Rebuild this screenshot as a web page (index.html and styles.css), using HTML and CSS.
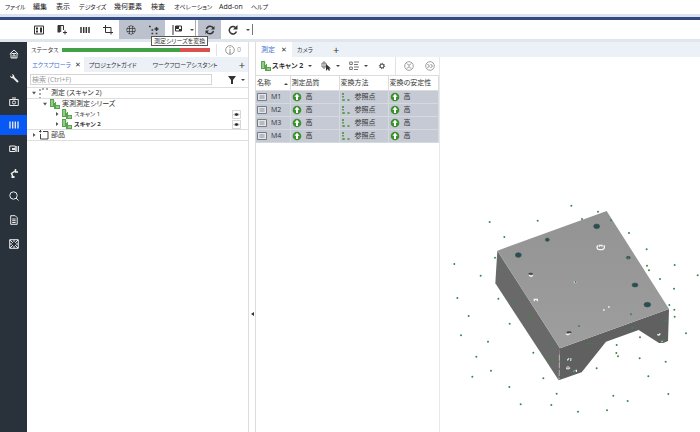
FILE: index.html
```html
<!DOCTYPE html>
<html lang="ja">
<head>
<meta charset="utf-8">
<title>測定</title>
<link rel="stylesheet" href="styles.css">
</head>
<body>
<svg class="defs" aria-hidden="true">
  <defs>
    <symbol id="scan" viewBox="0 0 10 10"><path d="M0 0h4v8H0zM4 3h2v3h4v4H4z" fill="#58a44c"/><path d="M4.500 1v3M2 1v6M6 8h3" stroke="#d6ecd0" fill="none"/></symbol>
    <symbol id="up" viewBox="0 0 10 10"><circle cx="5" cy="5" r="4.300" fill="#3b8f2c"/><path d="M5 1.800 7.600 4.700H6V8H4V4.700H2.400z" fill="#fff"/></symbol>
    <symbol id="ref" viewBox="0 0 10 10"><path d="M2 1v2M2 4v1.500M1.300 8h2.500M6.500 8h2" stroke="#3b8f2c" stroke-width="1.500"/></symbol>
    <symbol id="meas" viewBox="0 0 10 8"><path d="M.5.5h9v7h-9z" fill="#e2e5ea" stroke="#777c84"/><path d="M2.500 3h5M2.500 5h5" stroke="#8b9098"/></symbol>
    <symbol id="eye" viewBox="0 0 10 10"><path d="M.5.5h9v9h-9z" fill="#fff" stroke="#cfcfcf"/><path d="M1.300 5Q5 1.500 8.700 5 5 8.500 1.300 5z" fill="#aaa"/><circle cx="5" cy="5" r="1.500" fill="#222"/></symbol>
  </defs>
</svg>
<nav class="menu">
  <button>ファイル</button><button>編集</button><button>表示</button><button>デジタイズ</button><button>幾何要素</button><button>検査</button><button>オペレーション</button><button>Add-on</button><button>ヘルプ</button>
</nav>
<div class="toolbar">
  <button aria-label="パネル"><svg viewBox="0 0 10 10"><path d="M.5 1h9v8h-9z"/><path d="M2 2.500h2v2H2zM2 5.500h2v2H2zM6 2.500h2v5H6z" class="fill"/></svg></button>
  <button aria-label="追加"><svg viewBox="0 0 10 10"><path d="M1 .5h5.500V5M3.700.5V7M6 7.500h4M8 5.500v4"/><path d="M.5.500H3v7H.5z" class="fill"/></svg></button>
  <button aria-label="測定シリーズ"><svg viewBox="0 0 10 10"><path d="M1 2v6M3.700 2v6M6.300 2v6M9 2v6" stroke-width="1.500"/></svg></button>
  <button aria-label="切り取り"><svg viewBox="0 0 10 10"><path d="M0 2.500h8v7M2.500 0v7.500H10"/></svg></button>
  <button class="on" aria-label="グリッド"><svg viewBox="0 0 10 10"><path d="M1 3.500h8M1 6.500h8M3.500 1v8M6.500 1v8" stroke-width=".7"/><circle cx="5" cy="5" r="4.200" stroke-width=".8" stroke-dasharray="2 .6"/></svg></button>
  <button class="on" aria-label="測定シリーズを変換"><svg viewBox="0 0 10 10"><path d="M0 1.500h1.700M2.500 5h1.700M2.500 8.500h1.700M5.500 4h4M7.500 2v4M6.700 8.500h1.700" stroke-width="1.500"/></svg></button>
  <button aria-label="旗"><svg viewBox="0 0 10 10"><path d="M1 0v10M3.500 1h6v5h-6z"/><path d="M4 1h3v3H4zM7 4h2.500v2H7z" class="fill"/></svg></button>
  <button class="drop" aria-label="旗の選択肢"></button>
  <button class="on sep" aria-label="再計算"><svg viewBox="0 0 10 10"><path d="M1.500 4a3.700 3.700 0 0 1 7-.5M8.500 6a3.700 3.700 0 0 1-7 .5" stroke-width="1.400"/><path d="M9.500 1v3.500H6zM.5 9V5.500H4z" class="fill"/></svg></button>
  <button aria-label="やり直す"><svg viewBox="0 0 10 10"><path d="M8.500 6.500A3.700 3.700 0 1 1 7.500 2.500" stroke-width="1.500"/><path d="M9.500 0v4.500H5z" class="fill"/></svg></button>
  <button class="drop" aria-label="やり直しの選択肢"></button>
  <i class="bar"></i>
  <span class="tip" role="tooltip">測定シリーズを変換</span>
</div>
<div class="work">
  <nav class="rail">
    <button aria-label="ホーム"><svg viewBox="0 0 10 10"><path d="M.8 5 5 1l4.200 4M2 4v5h6V4M4 9V6h2v3M3 4.500h4"/></svg></button>
    <button aria-label="設定"><svg viewBox="0 0 10 10"><path d="m4 4 5 5" stroke-width="1.800"/><path d="M1 2.500 2.500 4l1.300-1L3 1a2.700 2.700 0 0 1 2 4A2.700 2.700 0 0 1 1 2.500z" class="fill"/></svg></button>
    <button aria-label="カメラ"><svg viewBox="0 0 10 10"><path d="M.7 2.500h8.600v6H.7zM3 1h4"/><circle cx="5" cy="5.500" r="1.600"/></svg></button>
    <button class="active" aria-label="測定"><svg viewBox="0 0 10 10"><path d="M1 1.500v7M3.700 1.500v7M6.300 1.500v7M9 1.500v7" stroke-width="1.300"/></svg></button>
    <button aria-label="ビデオ"><svg viewBox="0 0 10 10"><path d="M.7 2h5.600v5.500H.7zM7.800 2v6M9.500 2v6"/><path d="M3 4h3v2H3z" class="fill"/></svg></button>
    <button aria-label="ロボット"><svg viewBox="0 0 10 10"><path d="M4 9 2.500 5.500 6 3M6.500 1v3H9" stroke-width="1.500"/><path d="M2.500 8h3v2h-3z" class="fill"/></svg></button>
    <button aria-label="検査"><svg viewBox="0 0 10 10"><circle cx="4.500" cy="4.500" r="3.700"/><path d="m7 7 2.500 2.500"/></svg></button>
    <button aria-label="レポート"><svg viewBox="0 0 10 10"><path d="M1.700.7h4.500l2 2v6.600H1.700zM3.200 4h3.500M3.200 5.700h3.500M3.200 7.500h3.500"/></svg></button>
    <button aria-label="全体"><svg viewBox="0 0 10 10"><path d="M.7.7h8.600v8.600H.7zM1 1l2.800 2.800M9 1 6.200 3.800M1 9l2.800-2.800M9 9 6.200 6.200M5 1v2M5 7v2M1 5h2M7 5h2"/></svg></button>
  </nav>
  <section class="explorer">
    <div class="status"><span class="kana">ステータス</span><div class="meter"><i></i></div><span class="info"><svg viewBox="0 0 10 10"><circle cx="5" cy="5" r="4.300"/><path d="M5 2v1.200M5 4v4M4 8h2"/></svg>0</span></div>
    <div class="tabs left">
      <button class="tab current kana">エクスプローラ</button><button class="close" aria-label="閉じる">✕</button><button class="tab kana">プロジェクトガイド</button><button class="tab kana">ワークフローアシスタント</button><button class="plus" aria-label="タブを追加">+</button>
    </div>
    <div class="search"><input type="text" placeholder="検索 (Ctrl+F)" aria-label="検索"><button aria-label="フィルター"><svg viewBox="0 0 10 10"><path d="M1 1h8L6 5v4H4V5z" class="fill"/></svg></button><button class="drop" aria-label="フィルターの選択肢"></button></div>
    <ul class="tree">
      <li class="root"><i class="open"></i><svg viewBox="0 0 10 10"><path d="M1 1v2M1 5v2M1 9v1M3 1h2M7 1h2" stroke="#555"/></svg>測定 (スキャン 2)</li>
      <li class="one"><i class="open"></i><svg><use href="#scan"/></svg>実測測定シリーズ</li>
      <li class="two"><i></i><svg><use href="#scan"/></svg><span class="kana">スキャン 1</span><button class="eye" aria-label="表示"><svg><use href="#eye"/></svg></button></li>
      <li class="two"><i></i><svg><use href="#scan"/></svg><b class="kana">スキャン 2</b><button class="eye" aria-label="表示"><svg><use href="#eye"/></svg></button></li>
      <li class="root"><i></i><svg viewBox="0 0 10 10"><path d="M4 1.500h5v7.500H1.500V4M0 1.500h2.500M1.500 0v2.500" stroke="#444" fill="none"/></svg>部品</li>
    </ul>
  </section>
  <button class="splitter" aria-label="パネルを畳む"></button>
  <main class="main">
    <div class="tabs">
      <button class="tab current">測定</button><button class="close" aria-label="閉じる">✕</button><button class="tab kana">カメラ</button><button class="plus" aria-label="タブを追加">+</button>
    </div>
    <div class="content">
      <section class="list">
        <div class="tools">
          <button class="series"><svg><use href="#scan"/></svg><b>スキャン 2</b></button><button class="drop" aria-label="シリーズの選択肢"></button>
          <button aria-label="選択"><svg viewBox="0 0 10 10"><path d="M3 0v8M1 2v4h4V2z" stroke="#777"/><path d="M5 3v7l1.700-2L8 10l1-1-1-1.500H10z" class="fill"/></svg></button><button class="drop" aria-label="選択の種類"></button>
          <button aria-label="一覧"><svg viewBox="0 0 10 10"><path d="M.7 1h2.600v2.500H.7zM.7 6h2.600v2.500H.7zM5 1h5M5 3.500h4M5 6h5M5 8.500h4" stroke="#777"/></svg></button><button class="drop" aria-label="一覧の種類"></button>
          <button aria-label="設定"><svg viewBox="0 0 10 10"><circle cx="5" cy="5" r="2"/><circle cx="5" cy="5" r="2.700" stroke-width=".8" stroke-dasharray="1 1.100"/></svg></button>
          <span class="ends"><button aria-label="折り畳む"><svg viewBox="0 0 10 10"><circle cx="5" cy="5" r="4.300" stroke="#888" stroke-width=".8"/><path d="m3 2.500 2 2 2-2M3 7.500l2-2 2 2" stroke="#666" stroke-width=".8"/></svg></button><button aria-label="次へ"><svg viewBox="0 0 10 10"><circle cx="5" cy="5" r="4.300" stroke="#888" stroke-width=".8"/><path d="m2.500 3 2 2-2 2M5.500 3l2 2-2 2" stroke="#666" stroke-width=".8"/></svg></button></span>
        </div>
        <table>
          <colgroup><col class="c1"><col class="c2"><col class="c3"><col class="c4"></colgroup>
          <thead><tr><th class="sorted">名称</th><th>測定品質</th><th>変換方法</th><th>変換の安定性</th></tr></thead>
          <tbody>
            <tr><td><svg><use href="#meas"/></svg>M1</td><td><svg><use href="#up"/></svg>高</td><td><svg><use href="#ref"/></svg>参照点</td><td><svg><use href="#up"/></svg>高</td></tr>
            <tr><td><svg><use href="#meas"/></svg>M2</td><td><svg><use href="#up"/></svg>高</td><td><svg><use href="#ref"/></svg>参照点</td><td><svg><use href="#up"/></svg>高</td></tr>
            <tr><td><svg><use href="#meas"/></svg>M3</td><td><svg><use href="#up"/></svg>高</td><td><svg><use href="#ref"/></svg>参照点</td><td><svg><use href="#up"/></svg>高</td></tr>
            <tr><td><svg><use href="#meas"/></svg>M4</td><td><svg><use href="#up"/></svg>高</td><td><svg><use href="#ref"/></svg>参照点</td><td><svg><use href="#up"/></svg>高</td></tr>
          </tbody>
        </table>
      </section>
      <section class="view">
        <svg viewBox="0 -399 780 1125" preserveAspectRatio="xMinYMin meet" role="img" aria-label="部品の3D表示">
          <defs><linearGradient id="top" x1="0" y1="0" x2="0" y2="1"><stop offset="0" stop-color="#939393"/><stop offset="1" stop-color="#9e9e9e"/></linearGradient></defs>
          <path d="M172 182 166 280 356 571 360 475z" fill="#696969"/>
          <path d="M360 475 356 571 425 547 498 455 596 420 657 459H670L684 453 687 357z" fill="#606060"/>
          <path d="M172 182 500 63 687 357 360 475z" fill="url(#top)"/>
          <path d="M358 494v74" stroke="#ccc" stroke-width="2" stroke-dasharray="18 5"/>
          <g fill="#294d50" stroke="#40585a" stroke-width="2"><ellipse cx="235" cy="195" rx="9" ry="7"/><ellipse cx="322" cy="149" rx="6" ry="5"/><ellipse cx="470" cy="109" rx="9" ry="7"/><ellipse cx="565" cy="203" rx="6" ry="4"/><ellipse cx="585" cy="285" rx="9" ry="6"/><ellipse cx="622" cy="344" rx="10" ry="7"/></g>
          <g fill="none" stroke="#f5f5f5" stroke-width="4"><path d="M473 166q-5 10 4 13h10q9-3 5-13M478 170v-4h8v4M267 255q7 7 12 1M283 334v-6h9v6M402 275q5 6 8 0M489 360h5M504 351h5M378 432q7 5 12-3M382 511l4-5h6v6M379 534q5 6 11-1M652 433q7 5 8-3M401 544h8v-5M664 452l3 4"/></g>
          <g fill="#444"><ellipse cx="272" cy="251" rx="7" ry="3"/><ellipse cx="387" cy="427" rx="8" ry="3"/></g>
          <ellipse cx="384" cy="532" rx="5" ry="4" fill="#aaa"/>
          <path class="dots" d="M149 96h0M193 141h0M293 92h0M394 47h0M426 87h0M474 65h0M513 91h0M567 129h0M620 178h0M621 227h0M627 241h0M704 225h0M773 256h0M660 267h0M702 296h0M165 203h0M43 222h0M122 257h0M52 324h0M175 326h0M184 227h0M218 340h0M407 276h0M565 204h0M86 378h0M209 401h0M63 436h0M144 455h0M109 500h0M280 488h0M97 560h0M153 542h0M310 565h0M208 591h0M350 611h0M242 643h0M334 645h0M414 665h0M501 661h0M563 633h0M520 617h0M470 535h0M530 465h0M529 489h0M534 499h0M600 442h0M599 505h0M625 559h0M677 515h0M685 612h0M738 430h0M704 380h0M703 359h0M688 345h0M578 413h0M573 373h0M417 408h0M456 461h0M445 461h0M337 458h0M268 375h0M272 383h0M328 504h0M331 512h0M389 507h0M405 545h0M671 449h0M663 452h0M676 392h0"/>
        </svg>
      </section>
    </div>
  </main>
</div>
</body>
</html>
```
FILE: styles.css
```css
* { box-sizing: border-box; }
body {
  margin: 0;
  min-height: 100vh;
  display: flex;
  flex-direction: column;
  overflow: hidden;
  background: #fff;
  color: #333;
  font: 7px/10px "Open Sans", "Noto Sans CJK JP", sans-serif;
  font-feature-settings: "palt";
}
button {
  border: 0;
  padding: 0;
  margin: 0;
  background: none;
  color: inherit;
  font: inherit;
  font-feature-settings: inherit;
  white-space: nowrap;
}
button svg { display: block; }
svg { width: 10px; height: 10px; flex: none; fill: none; stroke: currentColor; }
symbol, use { stroke: none; }
.fill { fill: currentColor; stroke: none; }
.defs { position: absolute; width: 0; height: 0; }
.kana { font-size: 6px; }

.menu {
  display: grid;
  grid-template-columns: 28px 23px 23px 35px 37px 23px 45px 32px auto;
  justify-content: start;
  height: 14px;
  padding-left: 5px;
  color: #222;
}
.menu button { text-align: left; }
.menu button:nth-child(1), .menu button:nth-child(4), .menu button:nth-child(7), .menu button:nth-child(9) { font-size: 6px; }

.toolbar {
  position: relative;
  display: flex;
  height: 28px;
  padding-left: 27px;
  border-top: 3px solid #dbe3ef;
  border-bottom: 3px solid #e1e6ee;
  box-shadow: inset 0 3px #314a80;
  color: #333;
}
.toolbar button {
  display: grid;
  place-items: center;
  width: 23px;
  margin-top: 3px;
}
.toolbar .on { background: #bcc2cd; }
.toolbar .drop { width: 7px; }
.toolbar .sep { margin-left: 3px; box-shadow: -2px 0 #fff, -3px 0 #aaa; }
.bar { width: 1px; height: 11px; margin: 7px 0 0 1px; background: #777; }
.drop::after {
  content: "";
  display: block;
  border: 2px solid transparent;
  border-top-color: #444;
  border-bottom: 0;
}
.tip {
  position: absolute;
  z-index: 2;
  left: 151px;
  top: 19px;
  padding: 0 2px;
  border: 1px solid #555;
  background: #fff;
  font-size: 6px;
  line-height: 8px;
  white-space: nowrap;
}

.work { flex: 1; display: grid; grid-template-columns: 27px 222px 7px 1fr; }
.rail { padding-top: 2px; background: #29313a; color: #eee; }
.rail button {
  display: grid;
  place-items: center;
  width: 100%;
  height: 20px;
  margin-bottom: 4px;
}
.rail button:nth-child(3n) { margin-bottom: 3px; }
.rail .active { background: #0758f5; }

.explorer { border-right: 1px solid #ddd; }
.status { display: flex; align-items: center; height: 15px; padding-left: 4px; }
.status > .kana { width: 31px; }
.meter { flex: 1; height: 4px; background: #d9524e; }
.meter i { display: block; width: 80%; height: 100%; background: #43a047; }
.info {
  display: flex;
  align-items: center;
  gap: 2px;
  height: 12px;
  margin-left: 6px;
  padding: 0 7px 0 8px;
  border-left: 1px solid #e2e2e2;
  color: #999;
}
.tabs { display: flex; height: 15px; background: #ecf1f8; }
.tab { padding: 0 5px; }
.close { padding: 0 5px 0 1px; }
.current { color: #3e6fd0; }
.current, .current + .close { background: #fff; }
.plus { padding: 0 3px; font-size: 11px; }
.left .current { padding-right: 3px; }
.left .close { padding-right: 3px; }
.left .close + .tab { padding-right: 2px; }
.left .close + .tab + .tab { margin-left: 9px; }
.left .plus { margin-left: auto; }
.search { display: flex; align-items: center; height: 15px; padding-left: 3px; }
.search input {
  flex: 1;
  min-width: 0;
  height: 11px;
  margin-right: 15px;
  padding: 0 1px;
  border: 1px solid #d5d5d5;
  font: inherit;
}
.search input::placeholder { color: #999; }
.search .drop { margin: 0 3px 0 4px; }
.tree { list-style: none; margin: 0; padding: 0; }
.tree li { display: flex; align-items: center; gap: 2px; height: 10px; padding: 0 7px 0 5px; }
.tree .root { height: 12px; border: solid #dedede; border-width: 1px 0; }
.tree .one { padding-left: 16px; }
.tree .two { padding-left: 28px; }
.tree i { width: 5px; height: 4px; background: #555; clip-path: polygon(20% 0, 70% 50%, 20% 100%); }
.tree .open { clip-path: polygon(0 20%, 80% 20%, 40% 90%); }
.eye { margin-left: auto; }
.eye svg { width: 9px; height: 9px; }
.splitter { display: grid; place-items: center; border-right: 1px solid #ddd; }
.splitter::after {
  content: "";
  margin-top: 154px;
  border: 2px solid transparent;
  border-right: 3px solid #333;
  border-left: 0;
}

.main { display: flex; flex-direction: column; min-width: 0; }
.main .plus { margin-left: 12px; }
.content { flex: 1; display: grid; grid-template-columns: 184px 1fr; }
.list { border-right: 1px solid #e5e8ec; }
.tools { display: flex; align-items: center; height: 18px; padding-left: 5px; gap: 5px; }
.series { display: flex; align-items: center; gap: 1px; }
.tools .drop { margin-right: 4px; }
.ends {
  display: flex;
  align-items: center;
  gap: 11px;
  height: 100%;
  margin-left: auto;
  padding: 0 4px 0 8px;
  border-left: 1px solid #e2e2e2;
}
table { width: 100%; border-collapse: collapse; table-layout: fixed; }
.c1 { width: 34px; }
.c2 { width: 49px; }
.c3 { width: 49px; }
th {
  height: 15px;
  padding: 0 1px;
  border: solid #dcdcdc;
  border-width: 1px 1px 1px 0;
  font-weight: 400;
  text-align: left;
  white-space: nowrap;
}
.sorted::after {
  content: "";
  float: right;
  margin: 5px 1px 0 0;
  border: 2px solid transparent;
  border-bottom-color: #444;
  border-top: 0;
}
tbody { background: #c5cad4; }
td {
  height: 13px;
  padding: 0 1px;
  border: solid #d5d9e0;
  border-width: 0 1px 1px 0;
  white-space: nowrap;
}
td svg { margin-right: 4px; vertical-align: middle; }
.view { min-width: 0; }
.view svg { display: block; width: 100%; height: auto; stroke: none; }
.view .dots { stroke: #3d8548; stroke-width: 6px; stroke-linecap: round; }
```
